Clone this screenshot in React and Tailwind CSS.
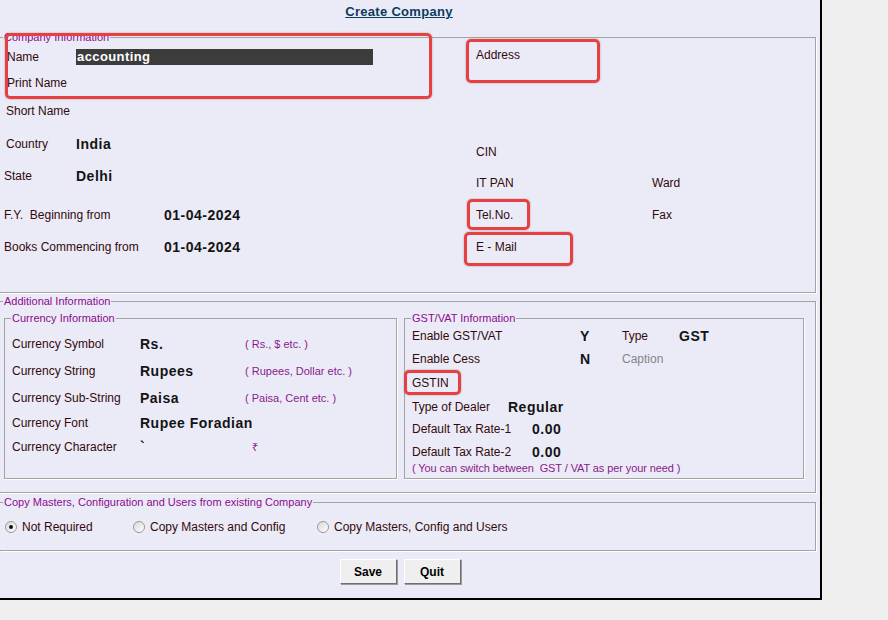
const font = { fontFamily: '"Liberation Sans", Arial, sans-serif' };

const lbl = 'text-[12px] leading-[14px] text-[#330a0a]';
const val = 'text-[14px] leading-[16px] font-bold tracking-[0.5px] text-[#141414]';
const hint = 'text-[11px] leading-[13px] text-[#8a1a8a]';
const legendCls = 'text-[11px] leading-[13px] text-[#8b0a8b]';
const box = 'border border-[#a3a3a3] shadow-[1px_1px_0_#ffffff]';

function Row({ mt, h = 'h-[24px]', children }) {
  return <div className={`flex items-center ${h} ${mt}`}>{children}</div>;
}

function Radio({ checked }) {
  return (
    <span className="flex h-[12px] w-[12px] items-center justify-center rounded-full border border-[#9a9a9a] bg-gradient-to-br from-[#d8d8d8] to-white">
      {checked && <span className="h-[4px] w-[4px] rounded-full bg-[#111]" />}
    </span>
  );
}

function Mark({ className }) {
  return (
    <div
      className={`pointer-events-none absolute rounded-[5px] border-[3px] border-[#e84040] shadow-[0_0_2px_rgba(0,0,0,0.35)] ${className}`}
    />
  );
}

export default function App() {
  return (
    <div className="min-h-[620px] w-[888px] bg-[#efefef]" style={font}>
      <div className="relative h-[600px] w-[822px] border-b-2 border-r-2 border-black bg-[#ebebf8]">
        <div className="h-[31px] w-[798px] pt-[4px] text-center text-[13px] leading-[16px]">
          <span className="font-bold tracking-[0.3px] text-[#0c3b5e] underline">Create Company</span>
        </div>

        {/* Company information */}
        <fieldset className={`h-[262px] w-[816px] border-l-0 ${box}`}>
          <legend className={`ml-[3px] px-[1px] ${legendCls}`}>Company Information</legend>
          <div className="flex pt-[1px]">
            <div className="flex w-[476px] flex-col">
              <Row mt="mt-0">
                <span className={`w-[76px] pl-[7px] ${lbl}`}>Name</span>
                <span className="h-[16px] w-[297px] bg-[#3c3c3c] pl-[1px] text-[13px] font-bold leading-[16px] tracking-[0.4px] text-white">
                  accounting
                </span>
              </Row>
              <Row mt="mt-[2px]">
                <span className={`pl-[7px] ${lbl}`}>Print Name</span>
              </Row>
              <Row mt="mt-[4px]">
                <span className={`pl-[6px] ${lbl}`}>Short Name</span>
              </Row>
              <Row mt="mt-[9px]">
                <span className={`w-[76px] pl-[6px] ${lbl}`}>Country</span>
                <span className={val}>India</span>
              </Row>
              <Row mt="mt-[8px]">
                <span className={`w-[76px] pl-[4px] ${lbl}`}>State</span>
                <span className={val}>Delhi</span>
              </Row>
              <Row mt="mt-[15px]">
                <span className={`w-[164px] pl-[4px] ${lbl}`}>F.Y.&nbsp; Beginning from</span>
                <span className={val}>01-04-2024</span>
              </Row>
              <Row mt="mt-[8px]">
                <span className={`w-[164px] pl-[4px] ${lbl}`}>Books Commencing from</span>
                <span className={val}>01-04-2024</span>
              </Row>
            </div>
            <div className="flex flex-1 flex-col">
              <Row h="h-[20px]" mt="mt-0">
                <span className={lbl}>Address</span>
              </Row>
              <Row h="h-[20px]" mt="mt-[77px]">
                <span className={lbl}>CIN</span>
              </Row>
              <Row h="h-[20px]" mt="mt-[11px]">
                <span className={`w-[176px] ${lbl}`}>IT PAN</span>
                <span className={lbl}>Ward</span>
              </Row>
              <Row h="h-[20px]" mt="mt-[12px]">
                <span className={`w-[176px] ${lbl}`}>Tel.No.</span>
                <span className={lbl}>Fax</span>
              </Row>
              <Row h="h-[20px]" mt="mt-[12px]">
                <span className={lbl}>E - Mail</span>
              </Row>
            </div>
          </div>
        </fieldset>

        {/* Additional information */}
        <fieldset className={`mt-[2px] h-[198px] w-[816px] border-l-0 ${box}`}>
          <legend className={`ml-[3px] px-[1px] ${legendCls}`}>Additional Information</legend>
          <div className="mt-[4px] flex">
            <fieldset className={`ml-[4px] h-[167px] w-[393px] ${box}`}>
              <legend className={`ml-[6px] px-[1px] ${legendCls}`}>Currency Information</legend>
              <Row h="h-[20px]" mt="mt-[9px]">
                <span className={`w-[135px] pl-[7px] ${lbl}`}>Currency Symbol</span>
                <span className={`w-[105px] ${val}`}>Rs.</span>
                <span className={hint}>( Rs., $ etc. )</span>
              </Row>
              <Row h="h-[20px]" mt="mt-[7px]">
                <span className={`w-[135px] pl-[7px] ${lbl}`}>Currency String</span>
                <span className={`w-[105px] ${val}`}>Rupees</span>
                <span className={hint}>( Rupees, Dollar etc. )</span>
              </Row>
              <Row h="h-[20px]" mt="mt-[7px]">
                <span className={`w-[135px] pl-[7px] ${lbl}`}>Currency Sub-String</span>
                <span className={`w-[105px] ${val}`}>Paisa</span>
                <span className={hint}>( Paisa, Cent etc. )</span>
              </Row>
              <Row h="h-[20px]" mt="mt-[5px]">
                <span className={`w-[135px] pl-[7px] ${lbl}`}>Currency Font</span>
                <span className={val}>Rupee Foradian</span>
              </Row>
              <Row h="h-[20px]" mt="mt-[4px]">
                <span className={`w-[135px] pl-[7px] ${lbl}`}>Currency Character</span>
                <span className={`w-[112px] ${val}`}>`</span>
                <span className={hint}>₹</span>
              </Row>
            </fieldset>

            <fieldset className={`ml-[7px] h-[167px] w-[400px] ${box}`}>
              <legend className={`ml-[6px] px-[1px] ${legendCls}`}>GST/VAT Information</legend>
              <Row h="h-[20px]" mt="mt-[1px]">
                <span className={`w-[175px] pl-[7px] ${lbl}`}>Enable GST/VAT</span>
                <span className={`w-[42px] ${val}`}>Y</span>
                <span className={`w-[57px] ${lbl}`}>Type</span>
                <span className={val}>GST</span>
              </Row>
              <Row h="h-[20px]" mt="mt-[3px]">
                <span className={`w-[175px] pl-[7px] ${lbl}`}>Enable Cess</span>
                <span className={`w-[42px] ${val}`}>N</span>
                <span className="text-[12px] leading-[14px] text-[#858585]">Caption</span>
              </Row>
              <Row h="h-[20px]" mt="mt-[4px]">
                <span className={`pl-[7px] ${lbl}`}>GSTIN</span>
              </Row>
              <Row h="h-[20px]" mt="mt-[4px]">
                <span className={`w-[103px] pl-[7px] ${lbl}`}>Type of Dealer</span>
                <span className={val}>Regular</span>
              </Row>
              <Row h="h-[20px]" mt="mt-[2px]">
                <span className={`w-[127px] pl-[7px] ${lbl}`}>Default Tax Rate-1</span>
                <span className={val}>0.00</span>
              </Row>
              <Row h="h-[20px]" mt="mt-[3px]">
                <span className={`w-[127px] pl-[7px] ${lbl}`}>Default Tax Rate-2</span>
                <span className={val}>0.00</span>
              </Row>
              <div className={`pl-[7px] tracking-[-0.1px] ${hint}`}>( You can switch between&nbsp; GST / VAT as per your need )</div>
            </fieldset>
          </div>
        </fieldset>

        {/* Copy masters */}
        <fieldset className={`mt-[3px] h-[55px] w-[816px] border-l-0 ${box}`}>
          <legend className={`ml-[3px] px-[1px] ${legendCls}`}>
            Copy Masters, Configuration and Users from existing Company
          </legend>
          <div className="mt-[8px] flex h-[20px] items-center pl-[5px]">
            <label className="flex w-[128px] items-center gap-[5px]">
              <Radio checked />
              <span className={lbl}>Not Required</span>
            </label>
            <label className="flex w-[184px] items-center gap-[5px]">
              <Radio />
              <span className={lbl}>Copy Masters and Config</span>
            </label>
            <label className="flex items-center gap-[5px]">
              <Radio />
              <span className={lbl}>Copy Masters, Config and Users</span>
            </label>
          </div>
        </fieldset>

        <div className="mt-[8px] flex w-[800px] justify-center gap-[7px]">
          {['Save', 'Quit'].map((b) => (
            <button
              key={b}
              className="h-[25px] w-[57px] border border-b-[#6f6f6f] border-l-white border-r-[#6f6f6f] border-t-white bg-[#efefef] text-[12px] font-bold text-black shadow-[1px_1px_0_#9a9a9a]"
            >
              {b}
            </button>
          ))}
        </div>

        <Mark className="left-[5px] top-[33px] h-[66px] w-[427px]" />
        <Mark className="left-[466px] top-[39px] h-[44px] w-[134px]" />
        <Mark className="left-[467px] top-[199px] h-[31px] w-[63px]" />
        <Mark className="left-[464px] top-[232px] h-[34px] w-[109px]" />
        <Mark className="left-[404px] top-[370px] h-[25px] w-[57px]" />
      </div>
    </div>
  );
}
